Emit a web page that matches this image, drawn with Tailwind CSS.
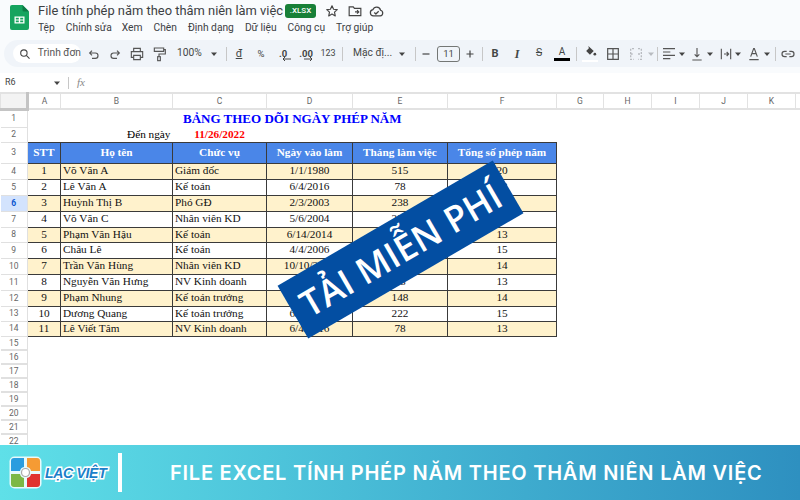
<!DOCTYPE html>
<html lang="vi">
<head>
<meta charset="utf-8">
<script src="https://cdn.jsdelivr.net/npm/@tailwindcss/browser@4"></script>
</head>
<body class="w-[800px] h-[500px] overflow-hidden bg-white font-['Roboto',sans-serif]">
<div class="relative w-[800px] h-[500px] overflow-hidden flex flex-col">
  <!-- Header -->
  <header class="h-[73px] shrink-0 bg-[#f9fbfd] flex flex-col">
    <div class="h-[40px] flex">
      <svg class="ml-[10px] mt-[5px] w-[19px] h-[25px] shrink-0" viewBox="0 0 19 25"><path d="M2 0H12.500L19 6.500V23a2 2 0 0 1-2 2H2a2 2 0 0 1-2-2V2a2 2 0 0 1 2-2z" fill="#16a45f"/><path d="M12.500 0L19 6.500H14a1.500 1.500 0 0 1-1.500-1.500z" fill="#0c7a45"/><path d="M4.500 11.500H14.500V18.500H4.500zM5.800 12.800V14.400H8.800V12.800zM10.200 12.800V14.400H13.200V12.800zM5.800 15.600V17.200H8.800V15.600zM10.200 15.600V17.200H13.200V15.600z" fill="#fff" fill-rule="evenodd"/></svg>
      <div class="ml-[9px] flex flex-col">
        <div class="flex items-center h-[22px]">
          <span class="text-[12.9px] leading-none text-[#3c4043] w-[247px] whitespace-nowrap">File tính phép năm theo thâm niên làm việc</span>
          <span class="w-[31px] h-[14px] rounded-[3px] bg-[#188038] text-white text-[8px] font-medium flex items-center justify-center leading-none">.XLSX</span>
          <svg class="ml-[9px] w-[14px] h-[14px]" viewBox="0 0 24 24" fill="none" stroke="#444" stroke-width="2" stroke-linejoin="round"><path d="M12 3l2.700 6 6.300.7-4.700 4.300 1.300 6.500L12 17.200 6.400 20.500l1.300-6.500L3 9.700 9.300 9z"/></svg>
          <svg class="ml-[9px] w-[14px] h-[14px]" viewBox="0 0 24 24" fill="none" stroke="#444" stroke-width="2"><path d="M2 5h7l2 2.500h11V20H2z"/><path d="M12 13.500h6M15.500 10.500l3 3-3 3"/></svg>
          <svg class="ml-[7px] w-[15px] h-[15px]" viewBox="0 0 24 24" fill="none" stroke="#444" stroke-width="2" stroke-linejoin="round"><path d="M7 19a5 5 0 0 1-.800-9.900A6.500 6.500 0 0 1 18.500 10a4.600 4.600 0 0 1-.500 9z"/><path d="M8.500 13.500l2.500 2.500 4.500-4.500"/></svg>
        </div>
        <nav class="mt-[1px] flex text-[10.25px] leading-none text-[#3c4043] whitespace-nowrap">
          <span>Tệp</span><span class="ml-[11px]">Chỉnh sửa</span><span class="ml-[10px]">Xem</span><span class="ml-[11px]">Chèn</span><span class="ml-[11px]">Định dạng</span><span class="ml-[11px]">Dữ liệu</span><span class="ml-[11px]">Công cụ</span><span class="ml-[11px]">Trợ giúp</span>
        </nav>
      </div>
    </div>
    <!-- Toolbar -->
    <div class="ml-[4px] h-[27px] rounded-l-[14px] bg-[#f0f4f9] flex items-center text-[#444746] whitespace-nowrap">
      <div class="ml-[9px] w-[68px] h-[19px] rounded-full bg-white flex items-center shrink-0">
        <svg class="ml-[6px] w-[12px] h-[12px]" viewBox="0 0 24 24" fill="none" stroke="#444" stroke-width="2.200"><circle cx="10" cy="10" r="6.500"/><path d="M15 15l6.500 6.500"/></svg>
        <span class="ml-[7px] text-[10.25px] leading-none text-[#555]">Trình đơn</span>
      </div>
      <svg class="ml-[5px] w-4 h-4 shrink-0" viewBox="0 0 24 24" fill="none" stroke="#555" stroke-width="1.700"><path d="M9 7L5.500 10.500 9 14M5.500 10.500H14a4 4 0 0 1 0 8H9"/></svg>
      <svg class="ml-[5px] w-4 h-4 shrink-0" viewBox="0 0 24 24" fill="none" stroke="#555" stroke-width="1.700"><path d="M15 7l3.500 3.500L15 14M18.500 10.500H10a4 4 0 0 0 0 8h5"/></svg>
      <svg class="ml-[6px] w-4 h-4 shrink-0" viewBox="0 0 24 24" fill="none" stroke="#555" stroke-width="1.700"><path d="M7 8V3.500h10V8M7 17H3.500V8.500h17V17H17"/><path d="M7 14h10v6.500H7z"/></svg>
      <svg class="ml-[6px] w-4 h-4 shrink-0" viewBox="0 0 24 24" fill="none" stroke="#555" stroke-width="1.700"><path d="M5 3h14v5H5zM19 5.500h2.500V12H12v4"/><rect x="10" y="16" width="4" height="6"/></svg>
      <span class="ml-[10px] w-[25px] text-[10.25px] leading-none shrink-0">100%</span>
      <svg class="ml-[8px] w-2 h-2 shrink-0" viewBox="0 0 8 8"><path d="M1 2.500h6L4 6z" fill="#444"/></svg>
      <i class="ml-[8px] w-px h-[14px] bg-[#c7c7c7] shrink-0"></i>
      <span class="ml-[4px] w-4 text-center text-[11px] leading-none shrink-0 underline">đ</span>
      <span class="ml-[6px] w-4 text-center text-[9.5px] leading-none shrink-0">%</span>
      <span class="ml-[6px] w-4 text-center text-[9.5px] font-bold leading-none shrink-0 relative">.0<svg class="absolute left-[7px] top-[7px] w-[9px] h-[6px]" viewBox="0 0 9 6" fill="none" stroke="#444"><path d="M9 3H1M3 1L1 3l2 2"/></svg></span>
      <span class="ml-[7px] w-4 text-center text-[9.5px] font-bold leading-none shrink-0 relative">.00<svg class="absolute left-[6px] top-[7px] w-[9px] h-[6px]" viewBox="0 0 9 6" fill="none" stroke="#444"><path d="M0 3h8M6 1l2 2-2 2"/></svg></span>
      <span class="ml-[6px] w-4 text-center text-[9px] leading-none shrink-0">123</span>
      <i class="ml-[6px] w-px h-[14px] bg-[#c7c7c7] shrink-0"></i>
      <span class="ml-[10px] w-[37px] text-[10.25px] leading-none shrink-0">Mặc đị...</span>
      <svg class="ml-[8px] w-2 h-2 shrink-0" viewBox="0 0 8 8"><path d="M1 2.500h6L4 6z" fill="#444"/></svg>
      <i class="ml-[9px] w-px h-[14px] bg-[#c7c7c7] shrink-0"></i>
      <svg class="ml-[5px] w-[10px] h-[10px] shrink-0" viewBox="0 0 10 10"><path d="M1.500 5h7" stroke="#444" stroke-width="1.200"/></svg>
      <span class="ml-[6px] w-[23px] h-[16px] rounded-[3px] border border-[#747775] flex items-center justify-center text-[9.5px] leading-none shrink-0">11</span>
      <svg class="ml-[5px] w-[10px] h-[10px] shrink-0" viewBox="0 0 10 10"><path d="M1.500 5h7M5 1.500v7" stroke="#444" stroke-width="1.200"/></svg>
      <i class="ml-[7px] w-px h-[14px] bg-[#c7c7c7] shrink-0"></i>
      <span class="ml-[4px] w-4 text-center text-[11px] font-bold leading-none shrink-0">B</span>
      <span class="ml-[6px] w-4 text-center text-[12px] italic font-bold leading-none shrink-0 font-['Liberation_Serif',serif]">I</span>
      <span class="ml-[6px] w-4 text-center text-[10.5px] leading-none shrink-0 line-through">S</span>
      <span class="ml-[7px] w-4 h-[18px] flex flex-col items-center justify-start shrink-0"><span class="text-[10px] leading-[13px]">A</span><i class="w-4 h-[3px] bg-black"></i></span>
      <i class="ml-[6px] w-px h-[14px] bg-[#c7c7c7] shrink-0"></i>
      <span class="ml-[5px] w-4 h-[18px] flex flex-col items-center shrink-0">
        <svg class="w-[13px] h-[13px]" viewBox="0 0 24 24"><path d="M8 2l10 9-7 7-7-7 5-5z" fill="#444"/><circle cx="20" cy="17" r="2.500" fill="#444"/></svg>
        <i class="mt-[2px] w-4 h-[2px] bg-white"></i>
      </span>
      <svg class="ml-[7px] w-4 h-4 shrink-0" viewBox="0 0 24 24" fill="none" stroke="#555" stroke-width="1.800"><path d="M4 4h16v16H4zM12 4v16M4 12h16"/></svg>
      <svg class="ml-[7px] w-4 h-4 shrink-0" viewBox="0 0 24 24" fill="none" stroke="#b8bbc0" stroke-width="2"><path d="M9 4H4v16h5M15 4h5v16h-5M4 12h5M15 12h5" stroke-dasharray="3 2"/></svg>
      <svg class="ml-[3px] w-2 h-2 shrink-0" viewBox="0 0 8 8"><path d="M1 2.500h6L4 6z" fill="#b8bbc0"/></svg>
      <i class="ml-[2px] w-px h-[14px] bg-[#c7c7c7] shrink-0"></i>
      <svg class="ml-[3px] w-4 h-4 shrink-0" viewBox="0 0 24 24" fill="none" stroke="#555" stroke-width="1.700"><path d="M3 4h18M3 9h11M3 14h18M3 19h11"/></svg>
      <svg class="ml-[1px] w-2 h-2 shrink-0" viewBox="0 0 8 8"><path d="M1 2.500h6L4 6z" fill="#444"/></svg>
      <svg class="ml-[3px] w-4 h-4 shrink-0" viewBox="0 0 24 24" fill="none" stroke="#555" stroke-width="1.700"><path d="M12 3v13M8.500 12.500L12 16l3.500-3.500M5 21h14"/></svg>
      <svg class="ml-[1px] w-2 h-2 shrink-0" viewBox="0 0 8 8"><path d="M1 2.500h6L4 6z" fill="#444"/></svg>
      <svg class="ml-[4px] w-4 h-4 shrink-0" viewBox="0 0 24 24" fill="none" stroke="#555" stroke-width="1.700"><path d="M5 4v16M19 4v16M9 12h7M13 9l3 3-3 3"/></svg>
      <svg class="ml-0 w-2 h-2 shrink-0" viewBox="0 0 8 8"><path d="M1 2.500h6L4 6z" fill="#444"/></svg>
      <svg class="ml-[4px] w-4 h-4 shrink-0" viewBox="0 0 24 24" fill="none" stroke="#555" stroke-width="1.700"><path d="M7 16L11.500 4h1L17 16M9 11.500h6M5 20.500h14"/></svg>
      <svg class="ml-[1px] w-2 h-2 shrink-0" viewBox="0 0 8 8"><path d="M1 2.500h6L4 6z" fill="#444"/></svg>
      <i class="ml-[4px] w-px h-[14px] bg-[#c7c7c7] shrink-0"></i>
      <svg class="ml-[4px] w-4 h-4 shrink-0" viewBox="0 0 24 24" fill="none" stroke="#555" stroke-width="1.800"><path d="M10 8H7a4 4 0 0 0 0 8h3M14 8h3a4 4 0 0 1 0 8h-3M8 12h8"/></svg>
    </div>
  </header>

  <!-- Formula bar -->
  <div class="h-[19px] shrink-0 bg-white flex items-center text-[#444]">
    <span class="ml-[5px] w-[48px] text-[9px] leading-none">R6</span>
    <svg class="w-2 h-2" viewBox="0 0 8 8"><path d="M1 2.500h6L4 6z" fill="#444"/></svg>
    <i class="ml-[7px] w-px h-[12px] bg-[#c7c7c7]"></i>
    <span class="ml-[8px] text-[11px] italic leading-none text-[#888] font-['Liberation_Serif',serif]">fx</span>
  </div>

  <!-- Sheet -->
  <main class="flex-1 min-h-0 overflow-hidden bg-white">
    <table class="table-fixed w-[800px] border-collapse">
      <colgroup>
        <col class="w-[27px]"><col class="w-[33px]"><col class="w-[112px]"><col class="w-[94px]"><col class="w-[86px]"><col class="w-[95px]"><col class="w-[109px]"><col class="w-[47px]"><col class="w-[48px]"><col class="w-[48px]"><col class="w-[48px]"><col class="w-[48px]"><col class="w-[5px]">
      </colgroup>
      <thead class="text-[8.5px] text-[#666] [&_th]:font-normal [&_th]:p-0 [&_th]:border-x [&_th]:border-y-2 [&_th]:border-x-[#e2e2e2] [&_th]:border-y-[#e2e2e2] [&_th]:leading-none">
        <tr class="h-[16px]"><th class="bg-[#f3f3f3] border-r-[3px]! border-r-[#c4c4c4]! border-b-[3px]! border-b-[#c4c4c4]!"></th><th>A</th><th>B</th><th>C</th><th>D</th><th>E</th><th>F</th><th>G</th><th>H</th><th>I</th><th>J</th><th>K</th><th></th></tr>
      </thead>
      <tbody class="font-['Liberation_Serif',serif] [&_th]:font-['Roboto',sans-serif] [&_th]:text-[8.5px] [&_th]:text-[#666] [&_th]:font-normal [&_th]:p-0 [&_th]:border-b [&_th]:border-r [&_th]:border-[#e0e0e0]">
        <tr class="h-[18px]"><th>1</th><td colspan="6" class="p-0 text-center text-[13px] font-bold text-[#0000ff] leading-none">BẢNG THEO DÕI NGÀY PHÉP NĂM</td></tr>
        <tr class="h-[15px]"><th>2</th><td colspan="2" class="p-0 pr-[2px] text-right text-[11.25px] text-black leading-none">Đến ngày</td><td class="p-0 text-center text-[11.25px] font-bold text-[#ff0000] leading-none">11/26/2022</td></tr>
      </tbody>
      <tbody class="font-['Liberation_Serif',serif] text-[11.25px] text-[#111] [&_th]:font-['Roboto',sans-serif] [&_th]:text-[8.5px] [&_th]:text-[#666] [&_th]:font-normal [&_th]:p-0 [&_th]:leading-none [&_th]:border-b [&_th]:border-r [&_th]:border-[#e0e0e0] [&_td]:border [&_td]:border-[#3a3a3a] [&_td]:p-0 [&_td]:leading-none [&_td]:whitespace-nowrap [&_td]:overflow-hidden">
        <tr class="h-[21px] bg-[#4a86e8] text-white font-bold text-center"><th class="bg-white">3</th><td>STT</td><td>Họ tên</td><td>Chức vụ</td><td>Ngày vào làm</td><td>Tháng làm việc</td><td>Tổng số phép năm</td></tr>
        <tr class="h-[16px] bg-[#fff2cc]"><th class="bg-white">4</th><td class="text-center">1</td><td class="pl-[2px]!">Võ Văn A</td><td class="pl-[2px]!">Giám đốc</td><td class="text-center">1/1/1980</td><td class="text-center">515</td><td class="text-center">20</td></tr>
        <tr class="h-[16px]"><th>5</th><td class="text-center">2</td><td class="pl-[2px]!">Lê Văn A</td><td class="pl-[2px]!">Kế toán</td><td class="text-center">6/4/2016</td><td class="text-center">78</td><td class="text-center">13</td></tr>
        <tr class="h-[16px] bg-[#fff2cc]"><th class="bg-[#d3e3fd] text-[#0b57d0]! font-bold!">6</th><td class="text-center">3</td><td class="pl-[2px]!">Huỳnh Thị B</td><td class="pl-[2px]!">Phó GĐ</td><td class="text-center">2/3/2003</td><td class="text-center">238</td><td class="text-center">15</td></tr>
        <tr class="h-[16px]"><th>7</th><td class="text-center">4</td><td class="pl-[2px]!">Võ Văn C</td><td class="pl-[2px]!">Nhân viên KD</td><td class="text-center">5/6/2004</td><td class="text-center">222</td><td class="text-center">15</td></tr>
        <tr class="h-[15px] bg-[#fff2cc]"><th class="bg-white">8</th><td class="text-center">5</td><td class="pl-[2px]!">Phạm Văn Hậu</td><td class="pl-[2px]!">Kế toán</td><td class="text-center">6/14/2014</td><td class="text-center">102</td><td class="text-center">13</td></tr>
        <tr class="h-[16px]"><th>9</th><td class="text-center">6</td><td class="pl-[2px]!">Châu Lê</td><td class="pl-[2px]!">Kế toán</td><td class="text-center">4/4/2006</td><td class="text-center">198</td><td class="text-center">15</td></tr>
        <tr class="h-[16px] bg-[#fff2cc]"><th class="bg-white">10</th><td class="text-center">7</td><td class="pl-[2px]!">Trần Văn Hùng</td><td class="pl-[2px]!">Nhân viên KD</td><td class="text-center">10/10/2010</td><td class="text-center">146</td><td class="text-center">14</td></tr>
        <tr class="h-[16px]"><th>11</th><td class="text-center">8</td><td class="pl-[2px]!">Nguyễn Văn Hưng</td><td class="pl-[2px]!">NV Kinh doanh</td><td class="text-center">6/4/2016</td><td class="text-center">78</td><td class="text-center">13</td></tr>
        <tr class="h-[16px] bg-[#fff2cc]"><th class="bg-white">12</th><td class="text-center">9</td><td class="pl-[2px]!">Phạm Nhung</td><td class="pl-[2px]!">Kế toán trưởng</td><td class="text-center">8/1/2010</td><td class="text-center">148</td><td class="text-center">14</td></tr>
        <tr class="h-[15px]"><th>13</th><td class="text-center">10</td><td class="pl-[2px]!">Dương Quang</td><td class="pl-[2px]!">Kế toán trưởng</td><td class="text-center">6/4/2004</td><td class="text-center">222</td><td class="text-center">15</td></tr>
        <tr class="h-[15px] bg-[#fff2cc]"><th class="bg-white">14</th><td class="text-center">11</td><td class="pl-[2px]!">Lê Viết Tâm</td><td class="pl-[2px]!">NV Kinh doanh</td><td class="text-center">6/4/2016</td><td class="text-center">78</td><td class="text-center">13</td></tr>
      </tbody>
      <tbody class="[&_th]:text-[8.5px] [&_th]:text-[#666] [&_th]:font-normal [&_th]:p-0 [&_th]:leading-none [&_th]:border-b-2 [&_th]:border-r [&_th]:border-[#e0e0e0]">
        <tr class="h-[14px]"><th>15</th></tr><tr class="h-[14px]"><th>16</th></tr><tr class="h-[14px]"><th>17</th></tr><tr class="h-[14px]"><th>18</th></tr><tr class="h-[14px]"><th>19</th></tr><tr class="h-[14px]"><th>20</th></tr><tr class="h-[14px]"><th>21</th></tr><tr class="h-[14px]"><th>22</th></tr>
      </tbody>
    </table>
  </main>

  <!-- Bottom banner -->
  <footer class="h-[55px] shrink-0 bg-gradient-to-r from-[#5fe0e8] to-[#2e90c0] flex items-center">
    <svg class="ml-[9px] w-[33px] h-[33px] shrink-0" viewBox="0 0 33 33">
      <rect x="0.500" y="0.500" width="32" height="32" rx="5" fill="#fff" fill-opacity=".85"/>
      <path d="M2 5a3 3 0 0 1 3-3h10v9a5 5 0 0 0-4 4H2z" fill="#2a9ddf"/>
      <path d="M18 2h10a3 3 0 0 1 3 3v10h-9a5 5 0 0 0-4-4z" fill="#f59b34"/>
      <path d="M2 18h9a5 5 0 0 0 4 4v9H5a3 3 0 0 1-3-3z" fill="#7cb845"/>
      <path d="M22 18h9v10a3 3 0 0 1-3 3H18v-9a5 5 0 0 0 4-4z" fill="#e1332f"/>
      <circle cx="16.500" cy="16.500" r="4" fill="#fff" stroke="#aaa" stroke-width="1.200"/>
    </svg>
    <span class="ml-[3px] w-[68px] text-[14px] font-bold italic leading-none whitespace-nowrap tracking-[-0.3px] text-[#1b7fc9] font-['Liberation_Sans',sans-serif] [-webkit-text-stroke:3px_white] [paint-order:stroke_fill]">LẠC VIỆT</span>
    <i class="ml-[5px] w-[4px] h-[39px] bg-white shrink-0"></i>
    <span class="ml-[48px] text-[20px] font-semibold leading-none text-white whitespace-nowrap tracking-[0.77px] font-['Inter',sans-serif]">FILE EXCEL TÍNH PHÉP NĂM THEO THÂM NIÊN LÀM VIỆC</span>
  </footer>

  <!-- Diagonal ribbon -->
  <div class="absolute left-[275.5px] top-[218.5px] w-[249px] h-[61px] -rotate-[30.2deg] bg-[#034ea2] flex items-center justify-center text-white text-[36px] font-semibold leading-none whitespace-nowrap font-['Open_Sans',sans-serif]">TẢI MIỄN PHÍ</div>
</div>
</body>
</html>
